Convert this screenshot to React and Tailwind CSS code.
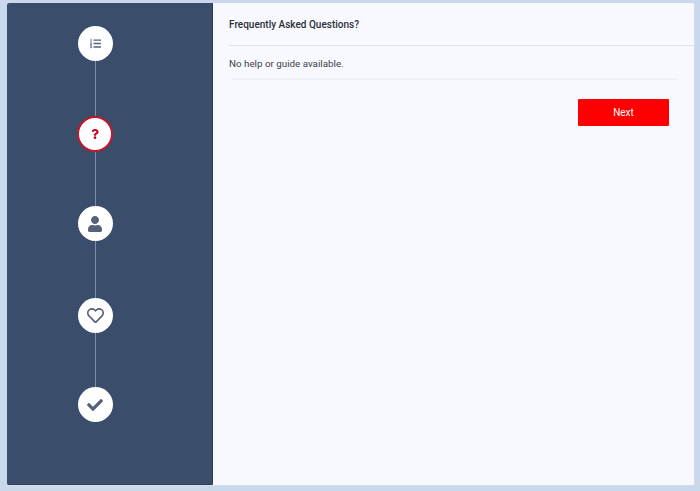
import React from 'react';
import { FaCheck, FaListOl, FaQuestion, FaRegHeart, FaUser } from 'react-icons/fa';

const Connector = ({ height }) => (
    <div className={`w-px bg-[#7f8ea6] ${height}`}></div>
);

const Circle = ({ children, active }) => (
    <div className={`flex items-center justify-center rounded-full bg-white shrink-0 ${active ? 'w-9 h-9 border-2 border-[#c0182c]' : 'w-[35px] h-[35px]'}`}>
        {children}
    </div>
);

export default function App() {
    return (
        <div className="w-[700px] h-[491px] bg-[#c9d8ec] pt-[3px] pl-[7px] pr-[6px] pb-[6px] font-['Roboto',sans-serif] overflow-hidden">
            <div className="flex h-full rounded-[2px] bg-[#f8f9ff] shadow-[1px_1px_0_#d5dcea]">
                {/* Steps */}
                <div className="w-[206px] shrink-0 bg-[#3a4d6b] border-r border-[#2a3850] border-b border-b-[#2f405c] rounded-l-[2px] flex flex-col items-center pt-[23px] pr-[29px]">
                    <Circle><FaListOl size={11} color="#56617a" /></Circle>
                    <Connector height="h-[55px]" />
                    <Circle active><FaQuestion size={10} color="#d0021b" /></Circle>
                    <Connector height="h-[54px]" />
                    <Circle><FaUser size={16} color="#56617a" /></Circle>
                    <Connector height="h-[57px]" />
                    <Circle><FaRegHeart size={17} color="#56617a" /></Circle>
                    <Connector height="h-[54px]" />
                    <Circle><FaCheck size={16} color="#56617a" /></Circle>
                </div>

                {/* Content */}
                <div className="flex-1 flex flex-col pl-4 pr-[25px]">
                    <h1 className="text-[10px] leading-[14px] font-medium text-[#2b2f38] mt-[15px]">Frequently Asked Questions?</h1>
                    <div className="h-px bg-[#dfe2ea] mt-[13px] -mr-[25px]"></div>
                    <p className="text-[9.8px] leading-[14px] text-[#3a3f4a] mt-[11px]">No help or guide available.</p>
                    <div className="h-[2px] bg-[#eff0f6] mt-[7px] ml-[3px] -mr-[8px]"></div>
                    <div className="flex justify-end mt-[19px]">
                        <button className="w-[91px] h-[27px] bg-[#ff0000] text-white text-[10px] font-normal rounded-[1px]">Next</button>
                    </div>
                </div>
            </div>
        </div>
    );
}
